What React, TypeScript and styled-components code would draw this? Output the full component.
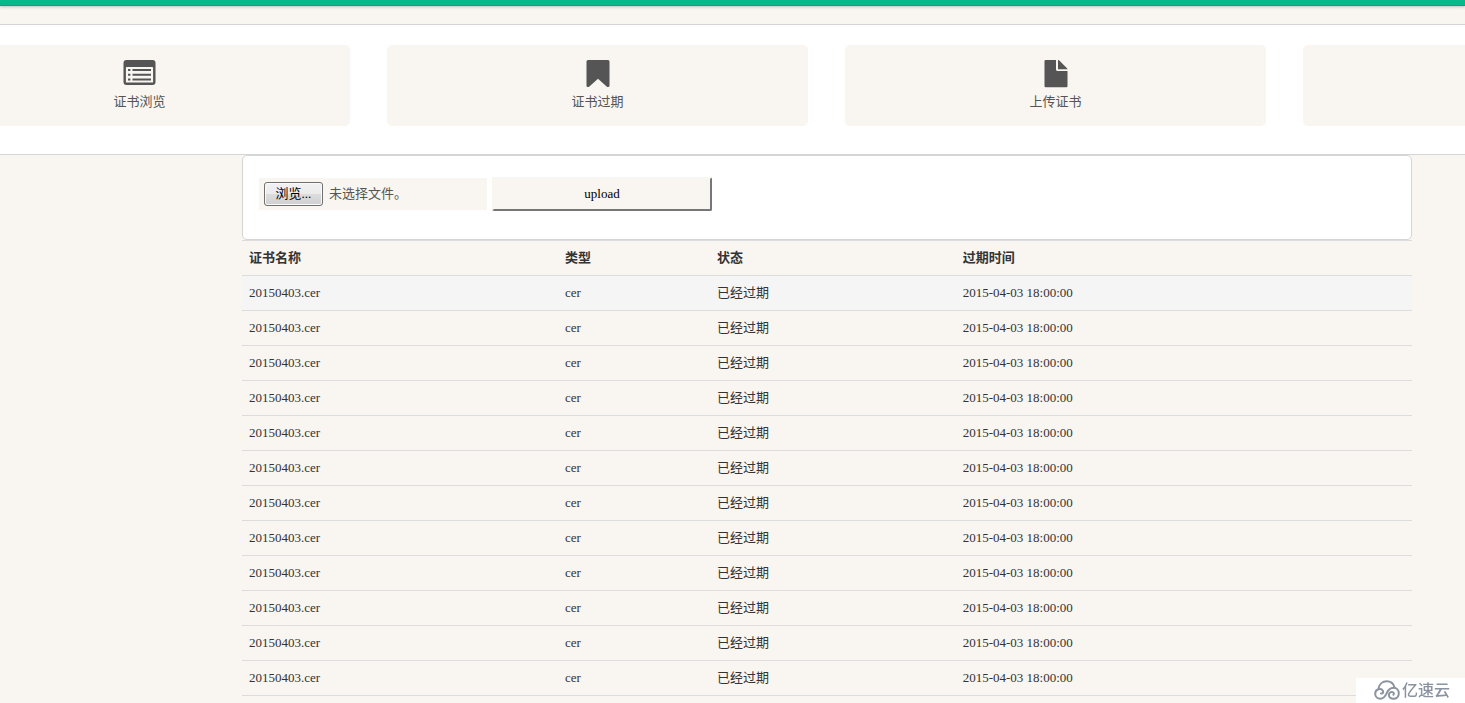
import React from "react";
import styled, { createGlobalStyle } from "styled-components";

const cream = "#f9f5f0";
const line = "#d5d5d5";

const GlobalStyle = createGlobalStyle`
  *, *::before, *::after { box-sizing: border-box; }
  body {
    margin: 0;
    background: ${cream};
    color: #333;
    font: 13px/20px "Liberation Serif", "Noto Sans CJK SC", serif;
    overflow-x: hidden;
  }
  button, input { font: inherit; }
`;

const Page = styled.div`
  position: relative;
  min-height: 100vh;
`;

const TopBar = styled.header`
  height: 6px;
  background: #0bb88b;
  border-bottom: 1px solid #0aa57d;
  box-shadow: 0 1px 3px rgba(0, 60, 45, 0.25);
  margin-bottom: 18px;
`;

const NavStrip = styled.nav`
  overflow: hidden;
  background: #fff;
  border-top: 1px solid ${line};
  border-bottom: 1px solid ${line};
  padding: 20px 0 28px;
`;

const TileList = styled.ul`
  display: grid;
  grid-template-columns: repeat(4, 1fr);
  gap: 37px;
  width: calc(100% + 330px);
  margin: 0 0 0 -71px;
  padding: 0;
  list-style: none;
`;

const Tile = styled.a`
  display: flex;
  flex-direction: column;
  align-items: center;
  gap: 4px;
  height: 81px;
  padding-top: 14px;
  border-radius: 5px;
  background: ${cream};
  color: #555;
  text-decoration: none;
`;

const TileIcon = styled.svg`
  height: 29px;
  fill: #555;
`;

const Content = styled.main`
  margin: 0 53px 0 242px;
`;

const UploadPanel = styled.form`
  display: flex;
  align-items: center;
  gap: 5px;
  padding: 21px 16px 28px;
  border: 1px solid ${line};
  border-radius: 5px;
  background: #fff;
`;

const FilePicker = styled.label`
  position: relative;
  display: flex;
  align-items: center;
  gap: 6px;
  width: 228px;
  height: 32px;
  padding: 0 5px;
  background: ${cream};
  color: #555;
`;

const FileInput = styled.input`
  position: absolute;
  inset: 0;
  width: 100%;
  opacity: 0;
  cursor: pointer;
`;

const BrowseFace = styled.span`
  width: 59px;
  height: 24px;
  border: 1px solid #707070;
  border-radius: 3px;
  box-shadow: inset 0 0 0 1px #fafafa;
  background: linear-gradient(#f2f2f2 0%, #ebebeb 50%, #dddddd 50%, #cfcfcf 100%);
  color: #000;
  text-align: center;
  line-height: 22px;
`;

const UploadButton = styled.button`
  width: 220px;
  height: 34px;
  padding: 0;
  border: 2px solid;
  border-color: ${cream} #777 #777 ${cream};
  border-radius: 2px;
  background: ${cream};
  color: #000;
`;

const CertTable = styled.table`
  width: 100%;
  table-layout: fixed;
  border-collapse: separate;
  border-spacing: 0;
  border-bottom: 1px solid #ddd;
`;

const HeadCell = styled.th<{ $width: string }>`
  width: ${(p) => p.$width};
  height: 35px;
  padding: 0 7px;
  border-top: 1px solid #ddd;
  text-align: left;
  font-weight: bold;
`;

const Row = styled.tr<{ $active: boolean }>`
  background: ${(p) => (p.$active ? "#f5f5f5" : "transparent")};
`;

const Cell = styled.td`
  height: 35px;
  padding: 0 7px;
  border-top: 1px solid #ddd;
`;

const Watermark = styled.div`
  position: fixed;
  right: 0;
  bottom: 0;
  display: flex;
  align-items: center;
  gap: 2px;
  width: 109px;
  height: 25px;
  padding: 0 0 2px 18px;
  background: #fff;
  color: #8b93a0;
  font: 500 16px/23px "Noto Sans CJK SC", sans-serif;
`;

const ListIcon = () => (
  <TileIcon viewBox="0 0 33 29" width="33" aria-hidden="true">
    <path
      fillRule="evenodd"
      d="M3.5 1h26a3 3 0 0 1 3 3v19a3 3 0 0 1-3 3h-26a3 3 0 0 1-3-3V4a3 3 0 0 1 3-3ZM3.6 8a.7.7 0 0 0-.7.7v14.2a.7.7 0 0 0 .7.7h25.800a.7.7 0 0 0 .7-.7V8.700a.7.7 0 0 0-.7-.7Z"
    />
    <path d="M5 10h2.400v2H5zM9.500 10h18.500v2H9.500zM5 14.700h2.400v2H5zM9.500 14.700h18.500v2H9.500zM5 19.400h2.400v2H5zM9.500 19.400h18.500v2H9.500z" />
  </TileIcon>
);

const BookmarkIcon = () => (
  <TileIcon viewBox="0 0 24 29" width="24" aria-hidden="true">
    <path d="M2 1h20q1.500 0 1.500 1.500v24.200q0 1.300-1.300 1.300h-1L12 19.700 2.800 28h-1Q.5 28 .5 26.700V2.500Q.5 1 2 1Z" />
  </TileIcon>
);

const FileIcon = () => (
  <TileIcon viewBox="0 0 24 29" width="24" aria-hidden="true">
    <path d="M1.500 1H12v9.500q0 1.500 1.500 1.500h10v15q0 1.200-1.200 1.200H1.700Q.5 28.200.5 27V2.200Q.5 1 1.500 1ZM14 1q1 .2 1.800 1l6.700 6.700q.8.8 1 1.500H14Z" />
  </TileIcon>
);

const CloudLogo = () => (
  <svg width="26" height="20" viewBox="0 0 26 20" fill="none" stroke="#8b93a0" strokeWidth="2" strokeLinecap="round" aria-hidden="true">
    <path d="M4.500 8.500C5.300 4 8.700 1.200 12.700 1.200c4 0 7 2.500 7.800 6.300" />
    <path d="M7 13.500c2.200 0 2.600-1.200 1.800-2.800C7.500 8.200 1.200 8.500 1.200 13.700c0 3 2.300 5.100 5.100 5.100 5.200 0 5.700-5.300 8.200-8.600C16 8.300 17.700 7.700 19.500 7.700c3.200 0 5.300 2.500 5.300 5.500 0 3.200-2.300 5.600-5.300 5.600-2.800 0-4.600-1.800-4.600-3.800 0-2.200 1.900-3.500 3.700-2.900 1.500.5 1.600 1.900.8 2.700" />
  </svg>
);

const tiles = [
  { label: "证书浏览", icon: <ListIcon /> },
  { label: "证书过期", icon: <BookmarkIcon /> },
  { label: "上传证书", icon: <FileIcon /> },
  { label: "", icon: null },
];

const columns = [
  { title: "证书名称", width: "27%" },
  { title: "类型", width: "13%" },
  { title: "状态", width: "21%" },
  { title: "过期时间", width: "39%" },
];

const certificates = Array.from({ length: 12 }, (_, id) => ({
  id,
  name: "20150403.cer",
  type: "cer",
  status: "已经过期",
  expires: "2015-04-03 18:00:00",
}));

export default function App() {
  return (
    <Page>
      <GlobalStyle />
      <TopBar />
      <NavStrip>
        <TileList>
          {tiles.map((tile, i) => (
            <li key={i}>
              <Tile href="#">
                {tile.icon}
                {tile.label && <span>{tile.label}</span>}
              </Tile>
            </li>
          ))}
        </TileList>
      </NavStrip>
      <Content>
        <UploadPanel onSubmit={(e) => e.preventDefault()}>
          <FilePicker>
            <BrowseFace>浏览...</BrowseFace>
            <span>未选择文件。</span>
            <FileInput type="file" />
          </FilePicker>
          <UploadButton type="submit">upload</UploadButton>
        </UploadPanel>
        <CertTable>
          <thead>
            <tr>
              {columns.map((c) => (
                <HeadCell key={c.title} $width={c.width} scope="col">
                  {c.title}
                </HeadCell>
              ))}
            </tr>
          </thead>
          <tbody>
            {certificates.map((c, i) => (
              <Row key={c.id} $active={i === 0}>
                <Cell>{c.name}</Cell>
                <Cell>{c.type}</Cell>
                <Cell>{c.status}</Cell>
                <Cell>{c.expires}</Cell>
              </Row>
            ))}
          </tbody>
        </CertTable>
      </Content>
      <Watermark>
        <CloudLogo />
        <span>亿速云</span>
      </Watermark>
    </Page>
  );
}
